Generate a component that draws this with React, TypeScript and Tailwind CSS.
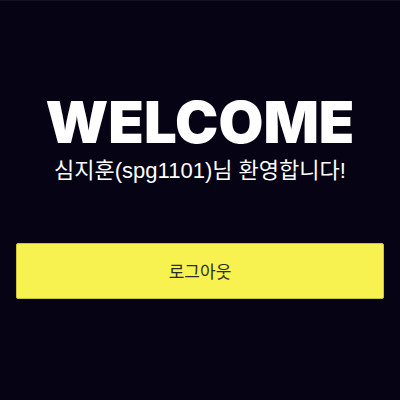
export default function App() {
  return (
    <div className="w-[400px] h-[400px] bg-[#050314] flex flex-col items-center border-t border-[#15131f]">
      <h1 className="mt-[86px] text-white text-[58px] leading-[70px] font-black tracking-[0px] [font-family:Inter,'Liberation_Sans',sans-serif]">
        WELCOME
      </h1>
      <p className="mt-[0px] text-white text-[22px] leading-[28px] [font-family:'Liberation_Sans','Noto_Sans_CJK_KR',sans-serif]">
        심지훈(spg1101)님 환영합니다!
      </p>
      <button className="mt-[58px] w-[368px] h-[56px] bg-[#f7f24f] border border-[#c9c43a] rounded-[2px] text-[#2b2b2b] text-[17px] [font-family:'Noto_Sans_CJK_KR',sans-serif]">
        로그아웃
      </button>
    </div>
  );
}
